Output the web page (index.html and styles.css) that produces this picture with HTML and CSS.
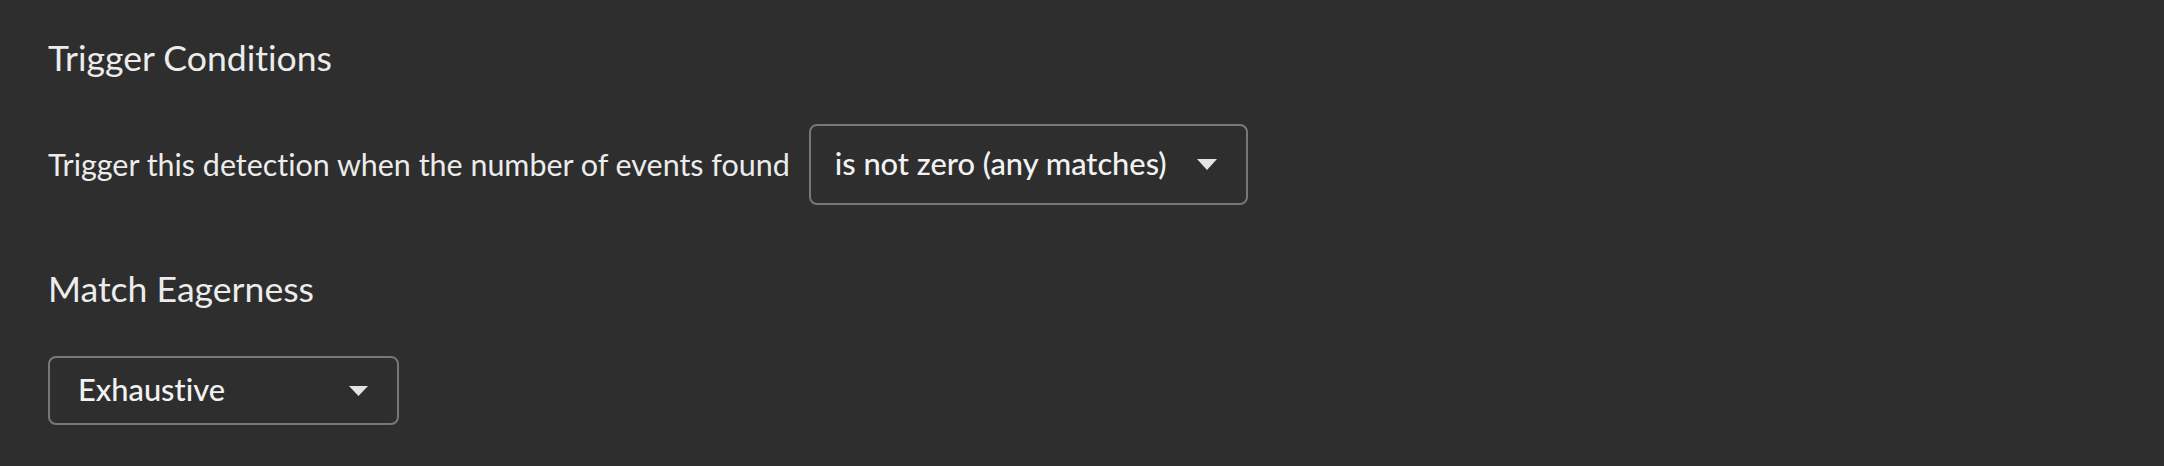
FILE: index.html
```html
<!DOCTYPE html>
<html>
<head>
<meta charset="utf-8">
<link rel="stylesheet" href="styles.css">
</head>
<body>
<main class="panel">
  <h2 class="section-title">Trigger Conditions</h2>
  <div class="condition-row">
    <span class="condition-label">Trigger this detection when the number of events found</span>
    <div class="select select-large">
      <span class="select-value">is not zero (any matches)</span>
      <svg class="caret caret-large" viewBox="0 0 20 11"><path d="M0 0 H20 L10 11 Z"/></svg>
    </div>
  </div>
  <h2 class="section-title section-title-second">Match Eagerness</h2>
  <div class="select select-small">
    <span class="select-value">Exhaustive</span>
    <svg class="caret caret-small" viewBox="0 0 19 10"><path d="M0 0 H19 L9.5 10 Z"/></svg>
  </div>
</main>
</body>
</html>
```
FILE: styles.css
```css
html, body {
  margin: 0;
  padding: 0;
  background: #2e2e2e;
}
body {
  font-family: Lato, "Noto Sans", sans-serif;
  font-variant-ligatures: none;
  color: #ececec;
}
.panel {
  display: flex;
  flex-direction: column;
  align-items: flex-start;
  padding: 37px 0 0 48px;
}
.section-title {
  margin: 0;
  font-size: 35.6px;
  font-weight: 400;
  line-height: 1.2;
  color: #ececec;
}
.section-title-second {
  margin-top: 63px;
}
.condition-row {
  display: flex;
  align-items: center;
  gap: 19px;
  margin-top: 44px;
}
.condition-label {
  font-size: 30.45px;
  line-height: 1.2;
}
.select {
  box-sizing: border-box;
  display: flex;
  align-items: center;
  border: 2px solid #777777;
  border-radius: 8px;
  background: #2e2e2e;
}
.select-value {
  font-size: 30.8px;
  font-weight: 500;
  line-height: 1.2;
  color: #f2f2f2;
}
.select-large {
  height: 81px;
  padding: 0 29px 0 24px;
  gap: 30px;
}
.select-small {
  width: 351px;
  height: 69px;
  margin-top: 46px;
  padding: 0 29px 0 28px;
  justify-content: space-between;
}
.caret {
  fill: #e4e4e4;
  display: block;
}
.caret-large {
  width: 20px;
  height: 11px;
}
.caret-small {
  width: 19px;
  height: 10px;
}
```
